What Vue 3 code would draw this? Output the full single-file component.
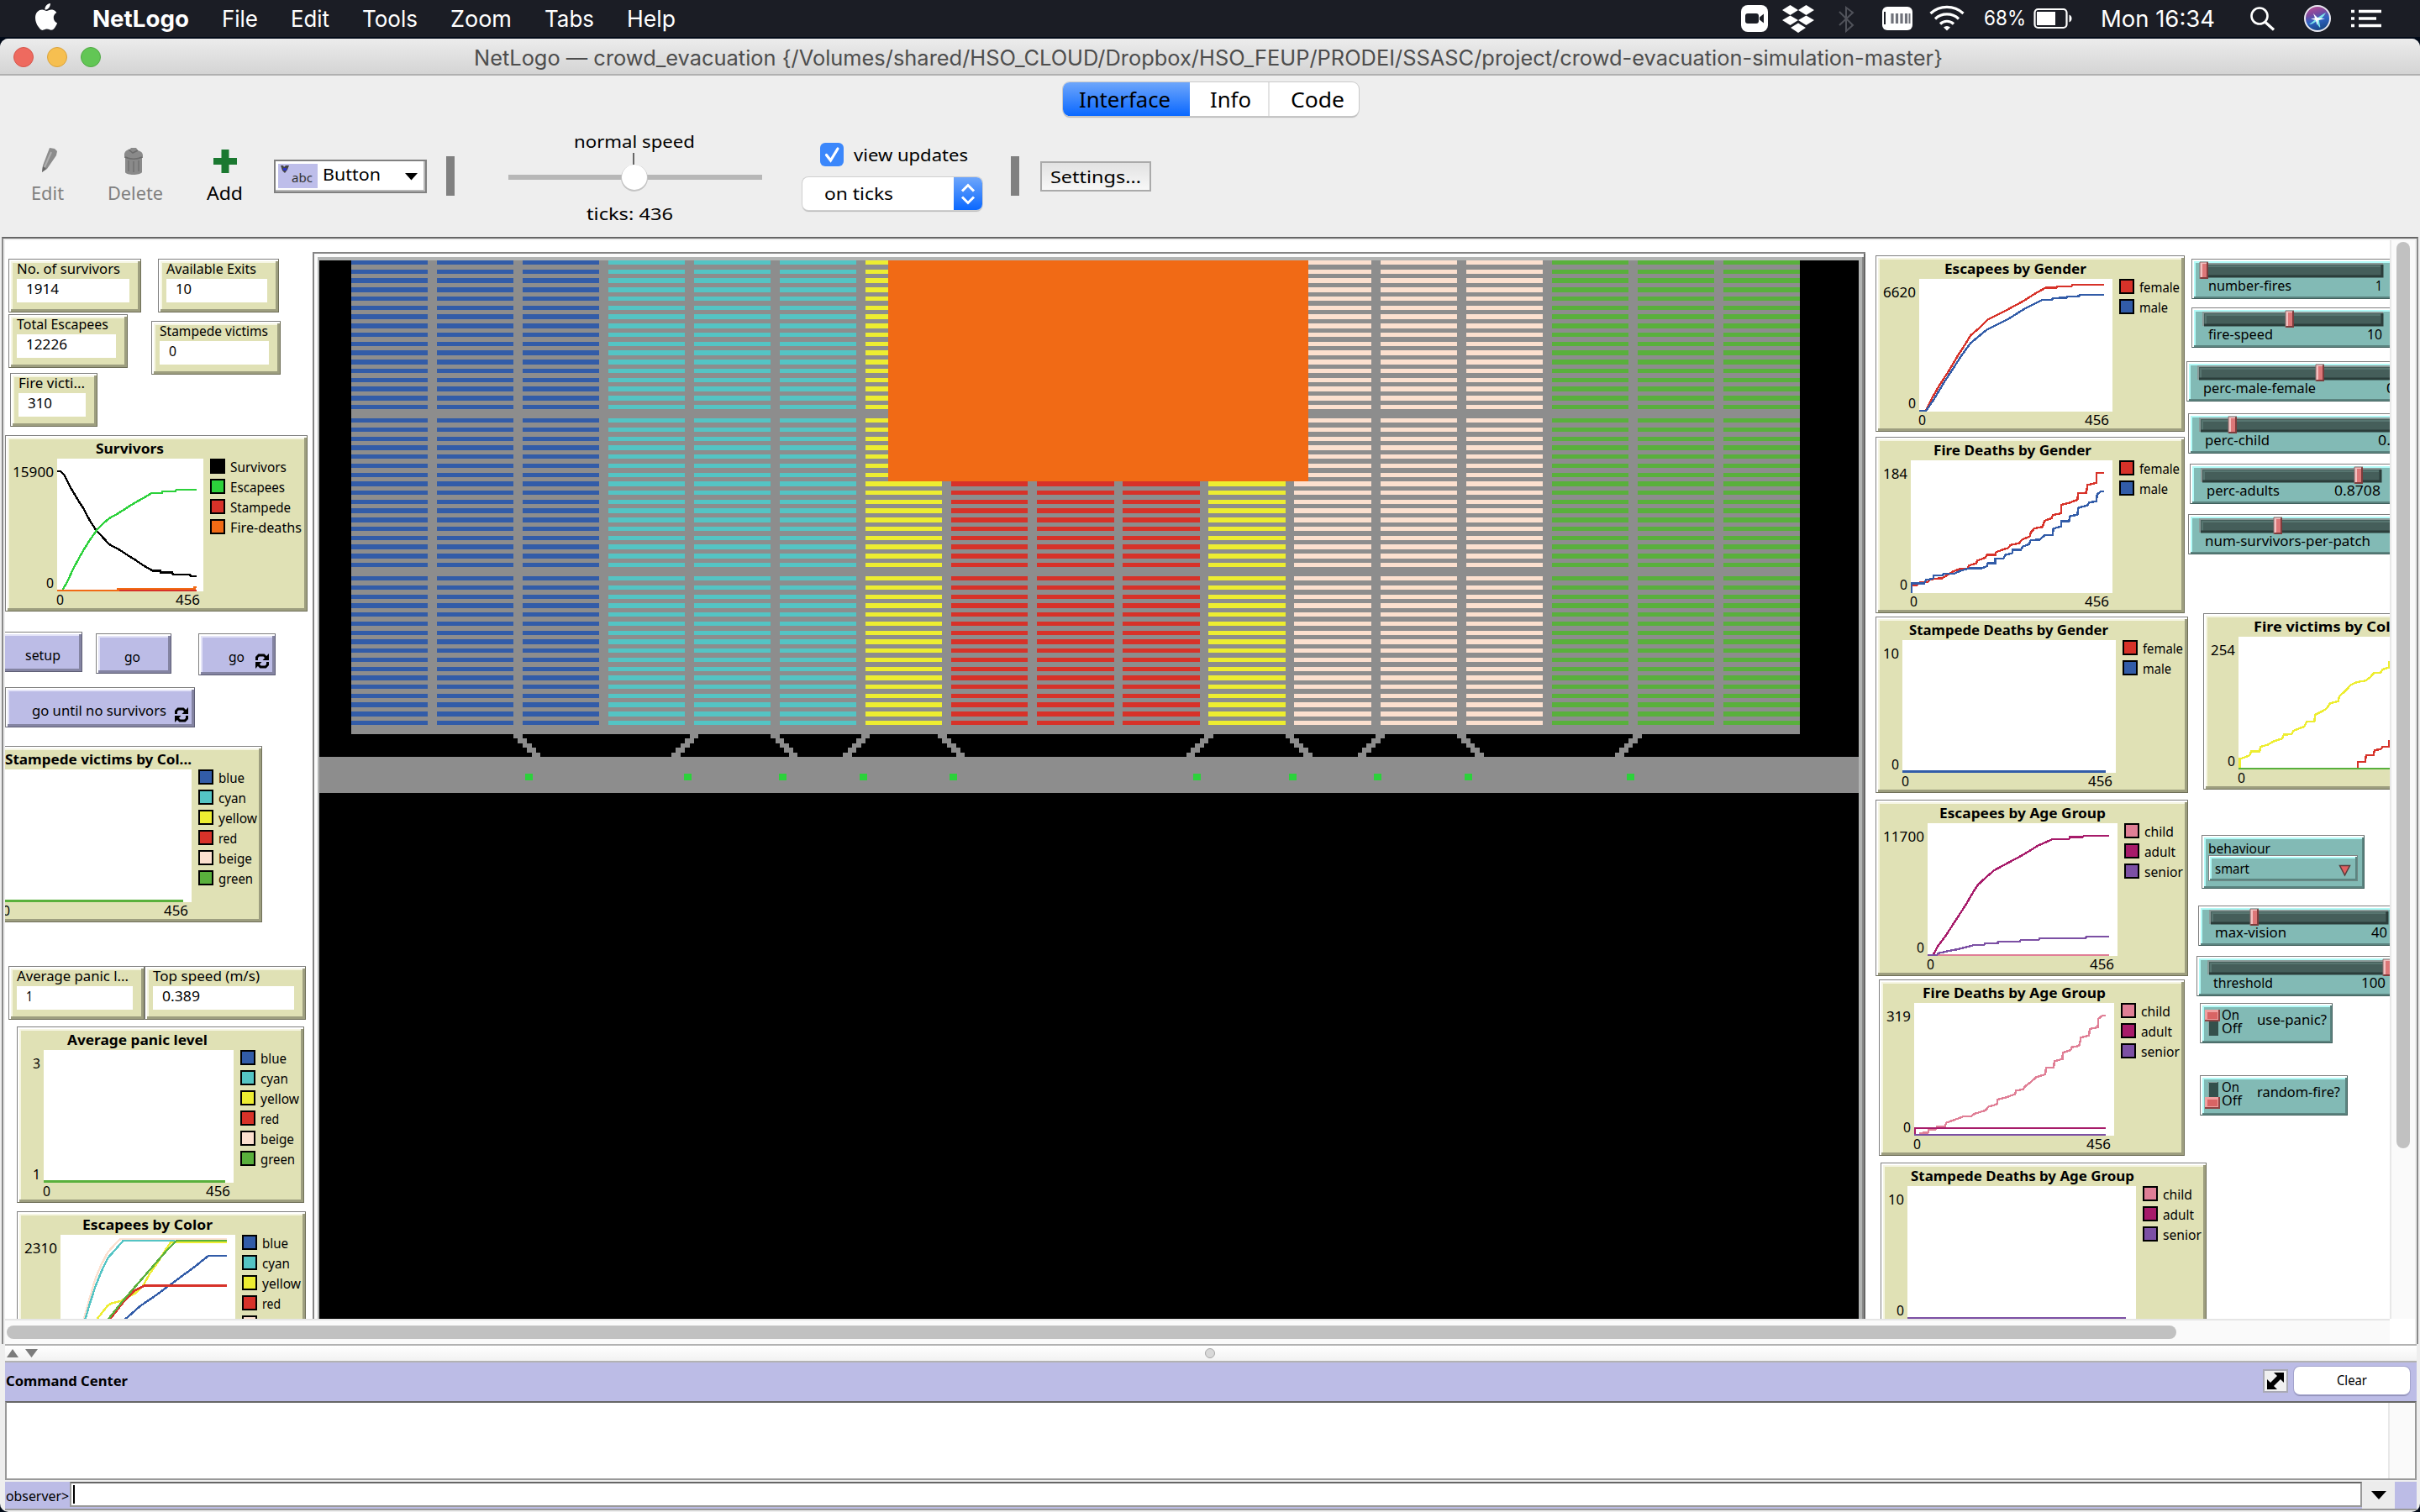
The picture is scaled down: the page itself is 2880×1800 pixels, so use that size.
<script setup>
import { h } from 'vue'

// One line of text set to an exact width; the baseline sits `size` px below the top.
const Txt = (p) =>
  h('svg', { width: p.w, height: Math.round(p.size * 1.2), style: 'display:block;overflow:visible;flex:none' }, [
    h('text', { x: 0, y: p.size, 'font-size': p.size, textLength: p.w, lengthAdjust: 'spacingAndGlyphs', fill: 'currentColor' }, p.t),
  ])
Txt.props = ['t', 'w', 'size']

const ORIGIN = { x: 6, y: 286 }
const place = (o) => ({
  left: o.x - ORIGIN.x + 'px',
  top: o.y - ORIGIN.y + 'px',
  width: o.w + 'px',
  height: o.h + 'px',
})

const menus = [
  { t: 'File', w: 43 }, { t: 'Edit', w: 46 }, { t: 'Tools', w: 66 },
  { t: 'Zoom', w: 73 }, { t: 'Tabs', w: 59 }, { t: 'Help', w: 58 },
]

const C = {
  blue: '#325ca8', cyan: '#54c4c4', yellow: '#eded31', red: '#d73229', beige: '#fce0cf', green: '#59b03c',
  lime: '#2cd13b', orange: '#f16a15', black: '#000000', pink: '#e07f96', magenta: '#a71b6a', purple: '#7c50a4',
}

const monitors = [
  { x: 10, y: 308, w: 158, h: 64, t: 'No. of survivors', tw: 123, v: '1914', vw: 39 },
  { x: 188, y: 308, w: 144, h: 64, t: 'Available Exits', tw: 107, v: '10', vw: 19 },
  { x: 10, y: 374, w: 142, h: 64, t: 'Total Escapees', tw: 109, v: '12226', vw: 49 },
  { x: 180, y: 382, w: 154, h: 64, t: 'Stampede victims', tw: 129, v: '0', vw: 9 },
  { x: 12, y: 444, w: 104, h: 64, t: 'Fire victi...', tw: 79, v: '310', vw: 29 },
  { x: 10, y: 1150, w: 162, h: 64, t: 'Average panic l...', tw: 133, v: '1', vw: 8 },
  { x: 172, y: 1150, w: 192, h: 64, t: 'Top speed (m/s)', tw: 127, v: '0.389', vw: 45 },
]

const buttons = [
  { x: 0, y: 752, w: 98, h: 48, t: 'setup', tx: 30, tw: 42 },
  { x: 114, y: 754, w: 90, h: 48, t: 'go', tx: 34, tw: 19 },
  { x: 236, y: 754, w: 92, h: 50, t: 'go', tx: 36, tw: 19, loop: 68 },
  { x: 6, y: 818, w: 226, h: 48, t: 'go until no survivors', tx: 32, tw: 160, loop: 202 },
]

const sixColors = [
  ['blue', C.blue, 31], ['cyan', C.cyan, 33], ['yellow', C.yellow, 46],
  ['red', C.red, 22], ['beige', C.beige, 40], ['green', C.green, 41],
]
const gender = [['female', C.red, 48], ['male', C.blue, 34]]
const ages = [['child', C.pink, 35], ['adult', C.magenta, 37], ['senior', C.purple, 46]]

const plots = [
  {
    x: 6, y: 518, w: 360, h: 210, t: 'Survivors', tx: 114, tw: 81, cx: 68, cw: 174, max: '15900', min: '0',
    legend: [['Survivors', C.black, 67], ['Escapees', C.lime, 65], ['Stampede', C.red, 72], ['Fire-deaths', C.orange, 85]],
    box: '204 673 522 398',
    lines: [
      [C.black, '204,711 216,711 223,716 230,722 240,740 250,757 270,785 285,806 300,825 320,858 345,890 366,908 390,930 430,948 460,965 480,975 515,995 545,1009 572,1009 574,1014 615,1014 617,1020 678,1020 680,1025 702,1025'],
      [C.lime, '222,1069 228,1060 240,1043 255,1015 270,990 285,967 300,945 320,918 345,888 365,870 390,852 420,838 450,822 480,806 510,792 540,777 577,777 579,771 627,771 629,766 702,766'],
      [C.red, '204,1069 702,1069'],
      [C.orange, '204,1069 422,1069 422,1064 694,1064 694,1058 702,1058'],
    ],
  },
  {
    x: -8, y: 888, w: 320, h: 210, t: 'Stampede victims by Col...', tx: 6, tw: 222, cx: 4, cw: 224, max: '', min: '',
    legend: sixColors, box: '12 78 672 344', lines: [[C.green, '12,419 654,419']],
  },
  {
    x: 20, y: 1222, w: 342, h: 210, t: 'Average panic level', tx: 80, tw: 167, cx: 52, cw: 226, max: '3', min: '1',
    legend: sixColors, box: '156 806 678 344', lines: [[C.green, '156,1147 804,1147']],
  },
  {
    x: 20, y: 1442, w: 344, h: 210, t: 'Escapees by Color', tx: 98, tw: 155, cx: 72, cw: 208, max: '2310', min: '0',
    legend: sixColors, box: '216 1285 624 344',
    lines: [
      [C.blue, '420,1525 450,1502 500,1470 560,1440 620,1408 700,1365 722,1352 745,1339 810,1339'],
      [C.yellow, '330,1520 348,1502 385,1468 400,1462 430,1457 480,1438 510,1418 535,1385 560,1360 590,1325 610,1304 810,1304'],
      [C.red, '370,1525 395,1502 440,1460 480,1430 515,1417 810,1417'],
      [C.beige, '292,1520 300,1502 320,1450 340,1400 360,1365 385,1330 410,1310 430,1296 810,1296'],
      [C.cyan, '296,1520 305,1502 320,1465 340,1420 362,1380 385,1345 410,1325 440,1300 625,1300'],
      [C.green, '365,1525 388,1502 440,1455 500,1405 560,1355 600,1322 630,1300 810,1300'],
    ],
  },
  {
    x: 2232, y: 304, w: 368, h: 210, t: 'Escapees by Gender', tx: 2314, tw: 169, cx: 2284, cw: 230, max: '6620', min: '0',
    legend: gender, box: '194 126 530 474',
    lines: [
      [C.red, '194,597 212,597 230,550 250,505 275,455 300,400 320,360 335,328 360,300 380,273 430,240 480,205 510,180 540,158 570,158 572,153 612,153 614,147 700,147'],
      [C.blue, '194,597 213,597 235,555 260,500 285,450 310,400 335,355 380,307 440,268 480,235 530,202 558,200 562,195 598,193 600,189 632,188 635,183 700,183'],
    ],
  },
  {
    x: 2232, y: 520, w: 368, h: 210, t: 'Fire Deaths by Gender', tx: 2301, tw: 188, cx: 2274, cw: 240, max: '184', min: '0',
    legend: gender, box: '171 774 553 474',
    lines: [
      [C.red, '173,1220 188,1220 195,1210 218,1208 220,1202 235,1197 257,1195 270,1185 285,1172 305,1162 328,1160 330,1150 350,1142 354,1132 375,1122 380,1112 403,1112 405,1102 425,1092 437,1088 445,1076 468,1070 475,1058 497,1046 500,1032 510,1017 532,1012 538,990 558,980 560,970 583,963 583,933 605,926 628,915 630,891 652,890 656,862 680,854 681,819 700,819'],
      [C.blue, '173,1248 173,1214 208,1214 212,1202 232,1196 234,1185 257,1185 262,1179 290,1179 308,1168 330,1160 365,1160 380,1152 382,1142 403,1142 403,1125 425,1125 430,1112 450,1105 450,1094 473,1094 478,1082 495,1074 500,1059 525,1057 538,1042 560,1040 562,1018 583,1010 583,992 605,992 607,974 628,968 630,944 655,935 660,925 680,920 682,896 692,885 700,885'],
    ],
  },
  {
    x: 2232, y: 734, w: 372, h: 210, t: 'Stampede Deaths by Gender', tx: 2272, tw: 237, cx: 2264, cw: 254, max: '10', min: '0',
    legend: gender, box: '148 97 585 474', lines: [[C.blue, '148,567 706,567']],
  },
  {
    x: 2622, y: 730, w: 380, h: 210, t: 'Fire victims by Color', tx: 2682, tw: 182, cx: 2664, cw: 240, max: '254', min: '0',
    legend: [], box: '1070 84 553 474',
    lines: [
      [C.yellow, '1073,555 1073,520 1085,516 1100,508 1105,494 1128,494 1130,477 1150,470 1165,458 1190,448 1194,434 1216,432 1220,420 1250,405 1257,387 1278,387 1280,363 1297,352 1310,342 1322,321 1343,315 1347,296 1365,275 1378,256 1395,246 1418,241 1430,230 1442,213 1460,212 1465,201 1482,194 1483,175 1500,175'],
      [C.red, '1397,552 1397,532 1417,530 1420,507 1440,507 1443,489 1460,486 1465,477 1482,477 1483,457 1500,457'],
      [C.green, '1070,555 1600,555'],
    ],
  },
  {
    x: 2232, y: 952, w: 372, h: 210, t: 'Escapees by Age Group', tx: 2308, tw: 198, cx: 2294, cw: 226, max: '11700', min: '0',
    legend: ages, box: '217 750 521 474',
    lines: [
      [C.pink, '217,1221 714,1221'],
      [C.magenta, '217,1221 232,1221 245,1190 265,1155 290,1105 320,1045 345,990 355,970 380,940 400,918 440,890 480,862 520,830 560,807 605,807 607,800 642,800 645,795 714,795'],
      [C.purple, '217,1221 243,1221 245,1215 265,1209 300,1200 345,1185 372,1185 375,1179 410,1178 412,1173 470,1173 472,1167 522,1167 525,1161 650,1161 653,1155 714,1155'],
    ],
  },
  {
    x: 2236, y: 1166, w: 364, h: 210, t: 'Fire Deaths by Age Group', tx: 2288, tw: 218, cx: 2278, cw: 238, max: '319', min: '0',
    legend: ages, box: '180 132 549 474',
    lines: [
      [C.pink, '193,597 218,595 220,585 240,583 243,574 265,572 268,560 285,552 300,545 315,537 337,537 345,528 375,516 385,502 407,494 409,477 430,470 457,458 460,445 480,440 484,430 500,415 515,397 540,387 542,363 563,363 565,340 587,332 588,310 610,300 613,290 633,285 638,255 660,248 662,225 684,219 686,188 697,177 706,177'],
      [C.magenta, '182,604 182,579 706,579'],
      [C.purple, '180,603 706,603'],
    ],
  },
  {
    x: 2238, y: 1384, w: 388, h: 210, t: 'Stampede Deaths by Age Group', tx: 2274, tw: 266, cx: 2270, cw: 272, max: '10', min: '0',
    legend: ages, box: '161 786 628 474', lines: [[C.purple, '161,1257 761,1257']],
  },
]

const digits = (s) => s.length * 10 - 1

const sliders = [
  { x: 2608, y: 308, w: 270, h: 48, t: 'number-fires', tw: 99, end: 228, knob: 10, v: '1', vx: 219, vw: 8 },
  { x: 2608, y: 366, w: 270, h: 48, t: 'fire-speed', tw: 77, end: 228, knob: 112, v: '10', vx: 209, vw: 18 },
  { x: 2602, y: 430, w: 270, h: 48, t: 'perc-male-female', tw: 134, end: 260, knob: 154, v: '0.5', vx: 238, vw: 25 },
  { x: 2604, y: 492, w: 270, h: 48, t: 'perc-child', tw: 77, end: 260, knob: 48, v: '0.1', vx: 226, vw: 25 },
  { x: 2606, y: 552, w: 270, h: 48, t: 'perc-adults', tw: 87, end: 228, knob: 196, v: '0.8708', vx: 172, vw: 55 },
  { x: 2604, y: 612, w: 270, h: 48, t: 'num-survivors-per-patch', tw: 197, end: 260, knob: 102, v: '', vx: 0, vw: 0 },
  { x: 2616, y: 1078, w: 270, h: 48, t: 'max-vision', tw: 85, end: 226, knob: 62, v: '40', vx: 206, vw: 19 },
  { x: 2614, y: 1138, w: 270, h: 48, t: 'threshold', tw: 71, end: 226, knob: 222, v: '100', vx: 196, vw: 29 },
]

const switches = [
  { x: 2618, y: 1194, w: 158, h: 48, t: 'use-panic?', tw: 83, on: true },
  { x: 2618, y: 1280, w: 176, h: 48, t: 'random-fire?', tw: 99, on: false },
]

// Stadium drawn patch by patch
const P = 5.3724
const px = (n) => Math.round(n * P)
const blockColors = [
  C.blue, C.blue, C.blue, C.cyan, C.cyan, C.cyan, C.yellow, C.red, C.red, C.red, C.yellow,
  C.beige, C.beige, C.beige, C.green, C.green, C.green,
]
const rowStarts = [0, 35, 70].flatMap((g) => Array.from({ length: 17 }, (_, k) => g + 2 * k))
const seats = blockColors.map((c, i) => {
  const x0 = px(7 + 19 * i)
  const x1 = px(24 + 19 * i)
  return { c, d: rowStarts.map((n) => `M${x0} ${px(n)}H${x1}V${px(n + 1)}H${x0}Z`).join('') }
})
const ramps = [[43, 1], [82, -1], [100, 1], [120, -1], [137, 1], [196, -1], [214, 1], [234, -1], [252, 1], [291, -1]]
const rampPath = ramps
  .flatMap(([c, dir]) => [0, 1, 2, 3, 4].map((k) => {
    const a = px(c + dir * k)
    const b = px(c + dir * k + 2)
    return `M${a} ${px(105 + k)}H${b}V${px(106 + k)}H${a}Z`
  }))
  .join('')
const exits = [629, 818, 931, 1027, 1134, 1424, 1538, 1639, 1747, 1940].map((x) => x - 380 - 4)
</script>

<template>
  <div class="screen">
    <header class="menubar">
      <svg class="apple" width="26" height="32" viewBox="0 0 26 32">
        <path fill="#fff" d="M17.9 0c.2 2-.6 3.900-1.700 5.300-1.200 1.400-3 2.500-4.800 2.300-.2-1.900.7-3.900 1.700-5.100C14.300 1.100 16.300.1 17.900 0zM25.300 11.100c-.3.200-3.500 2-3.500 6 0 4.700 4.100 6.300 4.200 6.400 0 .1-.6 2.200-2.200 4.400-1.300 2-2.700 3.900-4.900 3.900-2.100 0-2.700-1.200-5.200-1.200-2.400 0-3.200 1.300-5.200 1.300s-3.300-1.900-4.900-4.100C1.700 25.200 0 21.100 0 17.200 0 10.900 4.100 7.600 8.200 7.600c2.100 0 3.900 1.400 5.300 1.400 1.300 0 3.300-1.500 5.700-1.500.9 0 4.200.1 6.100 3.600z" />
      </svg>
      <Txt class="app-name" t="NetLogo" :w="115" :size="27" />
      <Txt v-for="m in menus" :key="m.t" :t="m.t" :w="m.w" :size="27" />
      <svg class="status" width="770" height="44" viewBox="2068 0 770 44">
        <rect x="2072" y="6" width="32" height="32" rx="8" fill="#fff" />
        <rect x="2077" y="16" width="16" height="12" rx="3" fill="#1b1d25" />
        <path d="M2094 20.500l5-4v11l-5-4z" fill="#1b1d25" />
        <g fill="#fff">
          <path d="M2130.500 6l9.500 6-9.500 6-9.500-6zM2149.500 6l9.500 6-9.500 6-9.500-6zM2130.500 18.500l9.500 5.500-9.500 6-9.500-6zM2149.500 18.500l9.500 5.500-9.500 6-9.500-6zM2140 27.500l9 5.500-9 6-9-6z" />
        </g>
        <path d="M2189 14l16 16-8 7V9l8 6-16 15" fill="none" stroke="#50525a" stroke-width="2" />
        <rect x="2240" y="8" width="36" height="28" rx="6" fill="#fff" />
        <path d="M2243 14v15" stroke="#1b1d25" stroke-width="2" />
        <path d="M2252 16v12M2257.500 16v12M2263 16v12M2268.500 16v12" stroke="#70727a" stroke-width="3.200" />
        <path d="M2272.500 16v12" stroke="#70727a" stroke-width="2" />
        <g fill="none" stroke="#fff" stroke-width="3.200">
          <path d="M2297.500 16a29 29 0 0 1 39 0" />
          <path d="M2303 22.500a20.500 20.500 0 0 1 28 0" />
          <path d="M2309 28.500a11.500 11.500 0 0 1 16 0" />
        </g>
        <path d="M2313 32.500a6 6 0 0 1 8 0l-4 4z" fill="#fff" />
        <text x="2361" y="30" font-size="24" textLength="50" lengthAdjust="spacingAndGlyphs" fill="#fff">68%</text>
        <rect x="2421.500" y="11" width="38" height="22" rx="4" fill="none" stroke="#fff" stroke-width="2.200" />
        <rect x="2424" y="14" width="22" height="16" fill="#fff" />
        <path d="M2462.500 17.500c4 1 4 8 0 9z" fill="#fff" />
        <text x="2500" y="32" font-size="27" textLength="136" lengthAdjust="spacingAndGlyphs" fill="#fff">Mon 16:34</text>
        <circle cx="2689" cy="19" r="9.500" fill="none" stroke="#fff" stroke-width="2.600" />
        <path d="M2696 26.500l10 9" stroke="#fff" stroke-width="3.200" />
        <defs>
          <linearGradient id="siri" x1="0" y1="0" x2="0.300" y2="1">
            <stop offset="0" stop-color="#c8508f" /><stop offset="0.400" stop-color="#7a4aa0" />
            <stop offset="0.650" stop-color="#2f63c4" /><stop offset="1" stop-color="#1b4a8c" />
          </linearGradient>
        </defs>
        <circle cx="2758" cy="22" r="15" fill="url(#siri)" stroke="#e8e8f0" stroke-width="2" />
        <path d="M2748 29c5-3 10-9 20-14-3 5-6 8-8 9 0 4 2 8 1 9-3-3-4-6-4-8-3 2-5 4-9 4z" fill="#7fe6ea" />
        <path d="M2753 16l5 5 9 1.500-8.500 1.500-1 6-1.500-6-6-1.500 5-1z" fill="#fff" />
        <path d="M2798 13.500h4M2798 22h4M2798 30.500h4" stroke="#fff" stroke-width="3.600" />
        <path d="M2807 13.500h27M2807 22h21M2807 30.500h27" stroke="#fff" stroke-width="3.600" />
      </svg>
    </header>

    <main class="window">
      <div class="titlebar">
        <i class="light close"></i><i class="light mini"></i><i class="light full"></i>
        <Txt class="title" t="NetLogo — crowd_evacuation {/Volumes/shared/HSO_CLOUD/Dropbox/HSO_FEUP/PRODEI/SSASC/project/crowd-evacuation-simulation-master}" :w="1748" :size="25" />
      </div>

      <div class="toolbar">
        <nav class="tabs">
          <span class="tab active"><Txt t="Interface" :w="109" :size="25" /></span>
          <span class="tab info"><Txt t="Info" :w="49" :size="25" /></span>
          <span class="tab code"><Txt t="Code" :w="64" :size="25" /></span>
        </nav>
        <div class="tools">
          <svg class="tool" width="60" height="90" viewBox="30 160 60 90">
            <path d="M59 176l6 1 3 3-1 5-11 16-6 4 1-8z" fill="#8c8c8c" />
            <path d="M61 181l-8 18" stroke="#b0b0b0" stroke-width="2" />
            <path d="M50 205l1-7 4 3z" fill="#666" />
            <text x="37" y="238" font-size="21" textLength="39" lengthAdjust="spacingAndGlyphs" fill="#808080">Edit</text>
          </svg>
          <svg class="tool t-delete" width="80" height="90" viewBox="120 160 80 90">
            <path d="M148 184c0-4 4-6 6-6l2-2h6l2 3c4 1 6 3 6 6v3h-1v17c-2 4-19 4-20 0v-17h-1z" fill="#8a8a8a" />
            <path d="M149 187c5 3 15 3 20 0M153 178l5 4 6-3" stroke="#6c6c6c" stroke-width="1.500" fill="none" />
            <path d="M153 191v13M159 192v13M165 191v13" stroke="#707070" stroke-width="1.500" />
            <text x="128" y="238" font-size="21" textLength="66" lengthAdjust="spacingAndGlyphs" fill="#808080">Delete</text>
          </svg>
          <svg class="tool t-add" width="60" height="90" viewBox="236 160 60 90">
            <path d="M263.500 178h9v10h9.500v8h-9.500v10h-9v-10H254v-8h9.500z" fill="#1a7830" />
            <text x="246" y="238" font-size="21" textLength="43" lengthAdjust="spacingAndGlyphs">Add</text>
          </svg>
          <div class="combo">
            <svg width="174" height="32" viewBox="330 194 174 32">
              <rect x="331" y="195" width="47" height="29" fill="#bebeea" />
              <path d="M334 197h3l1 2 2-2h4l-2 5-3 4-3-3z" fill="#444" /><path d="M337 200h4v3h-4z" fill="#2b33cc" />
              <text x="347" y="217" font-size="15" textLength="25" lengthAdjust="spacingAndGlyphs" fill="#333">abc</text>
              <text x="384" y="215" font-size="20" textLength="69" lengthAdjust="spacingAndGlyphs">Button</text>
              <path d="M482 206h15l-7.500 8.500z" />
            </svg>
          </div>
          <i class="sep s1"></i>
          <svg class="speed" width="310" height="120" viewBox="600 150 310 120">
            <text x="683" y="176" font-size="20" textLength="144" lengthAdjust="spacingAndGlyphs">normal speed</text>
            <path d="M754 182v16" stroke="#666" stroke-width="2" />
            <rect x="605" y="208" width="302" height="6" fill="#b7b7b7" />
            <circle cx="755" cy="212" r="16" fill="#c4c4c4" />
            <circle cx="755" cy="211" r="15" fill="#fff" />
            <text x="698" y="262" font-size="20" textLength="103" lengthAdjust="spacingAndGlyphs">ticks: 436</text>
          </svg>
          <div class="updates">
            <div class="check">
              <svg width="28" height="28" viewBox="0 0 28 28">
                <rect width="28" height="28" rx="6" fill="#3b87fb" />
                <path d="M7.500 14.500l5 6.500 8.500-14" fill="none" stroke="#fff" stroke-width="3.200" stroke-linecap="round" />
              </svg>
              <Txt t="view updates" :w="136" :size="20" />
            </div>
            <div class="popup">
              <Txt t="on ticks" :w="82" :size="20" />
              <span class="stepper">
                <svg width="18" height="26" viewBox="0 0 18 26" fill="none" stroke="#fff" stroke-width="3">
                  <path d="M2 9.500l7-7 7 7M2 16.500l7 7 7-7" />
                </svg>
              </span>
            </div>
          </div>
          <i class="sep s2"></i>
          <div class="settings"><Txt t="Settings..." :w="108" :size="20" /></div>
        </div>
      </div>

      <div class="workspace">
        <div class="work-row">
          <div class="canvas">
            <div v-for="m in monitors" :key="m.t" class="widget khaki" :style="place(m)">
              <svg :width="m.w" :height="m.h">
                <rect x="10" y="24" :width="m.w - 24" height="28" fill="#fff" />
                <text x="10" y="18" :textLength="m.tw" lengthAdjust="spacingAndGlyphs">{{ m.t }}</text>
                <text x="21" y="42" :textLength="m.vw" lengthAdjust="spacingAndGlyphs">{{ m.v }}</text>
              </svg>
            </div>

            <div v-for="(b, i) in buttons" :key="'b' + i" class="widget lavender" :style="place(b)">
              <svg :width="b.w" :height="b.h">
                <text :x="b.tx" y="34" :textLength="b.tw" lengthAdjust="spacingAndGlyphs">{{ b.t }}</text>
                <g v-if="b.loop" :transform="`translate(${b.loop} 24)`">
                  <path d="M1.500 8V4.500L4 2h6l3 3M14.500 10v3.500L12 16H6l-3-3" fill="none" stroke="#000" stroke-width="3" />
                  <path d="M8.500 8H16V0zM7.500 10H0v8z" />
                </g>
              </svg>
            </div>

            <div v-for="p in plots" :key="p.t" class="widget khaki" :style="place(p)">
              <svg :width="p.w" :height="p.h" :viewBox="`${p.x} ${p.y} ${p.w} ${p.h}`">
                <rect :x="p.cx" :y="p.y + 28" :width="p.cw" height="158" fill="#fff" />
                <text class="bold" :x="p.tx" :y="p.y + 22" :textLength="p.tw" lengthAdjust="spacingAndGlyphs">{{ p.t }}</text>
                <text v-if="p.max" :x="p.cx - 4 - digits(p.max)" :y="p.y + 50" :textLength="digits(p.max)" lengthAdjust="spacingAndGlyphs">{{ p.max }}</text>
                <text v-if="p.min" :x="p.cx - 13" :y="p.y + 182" textLength="9" lengthAdjust="spacingAndGlyphs">{{ p.min }}</text>
                <text :x="p.cx - 1" :y="p.y + 202" textLength="9" lengthAdjust="spacingAndGlyphs">0</text>
                <text :x="p.cx + p.cw - 33" :y="p.y + 202" textLength="29" lengthAdjust="spacingAndGlyphs">456</text>
                <g v-for="(l, i) in p.legend" :key="l[0]">
                  <rect :x="p.cx + p.cw + 9" :y="p.y + 29 + 24 * i" width="16" height="16" :fill="l[1]" stroke="#000" stroke-width="2" />
                  <text :x="p.cx + p.cw + 32" :y="p.y + 44 + 24 * i" :textLength="l[2]" lengthAdjust="spacingAndGlyphs">{{ l[0] }}</text>
                </g>
                <svg :x="p.cx" :y="p.y + 28" :width="p.cw" height="158" :viewBox="p.box" preserveAspectRatio="none">
                  <polyline v-for="(l, i) in p.lines" :key="i" class="curve" :points="l[1]" :stroke="l[0]" />
                </svg>
              </svg>
            </div>

            <div v-for="s in sliders" :key="s.t" class="widget teal" :style="place(s)">
              <svg :width="s.w" :height="s.h">
                <rect x="14" y="6" :width="s.end - 14" height="16" fill="#455e5a" />
                <path :d="`M14 22V6H${s.end}`" fill="none" stroke="#8a9a98" stroke-width="2" />
                <path :d="`M17 20V9H${s.end - 3}`" fill="none" stroke="#577570" stroke-width="2" />
                <path :d="`M15 21H${s.end - 1}V7`" fill="none" stroke="#2b3d3a" stroke-width="3" />
                <g :transform="`translate(${s.knob} 4)`">
                  <rect width="10" height="20" fill="#7d3c3c" />
                  <rect width="8" height="18" fill="#f3c0c0" />
                  <rect x="3" y="2" width="5" height="16" fill="#dc7778" />
                  <path d="M0 20V0h10" fill="none" stroke="#8a6a6a" stroke-width="1" />
                </g>
                <text x="20" y="38" :textLength="s.tw" lengthAdjust="spacingAndGlyphs">{{ s.t }}</text>
                <text v-if="s.v" :x="s.vx" y="38" :textLength="s.vw" lengthAdjust="spacingAndGlyphs">{{ s.v }}</text>
              </svg>
            </div>

            <div class="widget teal" :style="place({ x: 2620, y: 994, w: 194, h: 64 })">
              <svg width="194" height="64">
                <text x="8" y="22" textLength="74" lengthAdjust="spacingAndGlyphs">behaviour</text>
              </svg>
              <div class="chooser">
                <svg width="176" height="32">
                  <text x="8" y="22" textLength="41" lengthAdjust="spacingAndGlyphs">smart</text>
                  <path d="M156.500 12.500h12l-6 11.500z" fill="#df6161" stroke="#5b3b3b" stroke-width="1.500" />
                </svg>
              </div>
            </div>

            <div v-for="s in switches" :key="s.t" class="widget teal" :style="place(s)">
              <svg :width="s.w" :height="s.h">
                <rect x="10" y="8" width="12" height="31" fill="#34504c" />
                <path d="M10.500 39V8.500H21" fill="none" stroke="#8aa09e" />
                <g :transform="`translate(6 ${s.on ? 8 : 26})`">
                  <rect width="18" height="14" fill="#8f4343" />
                  <rect width="16" height="12" fill="#f0a0a0" />
                  <rect x="3" y="3" width="12" height="8" fill="#d96464" />
                </g>
                <text x="26" y="20" textLength="21" lengthAdjust="spacingAndGlyphs">On</text>
                <text x="26" y="36" textLength="24" lengthAdjust="spacingAndGlyphs">Off</text>
                <text x="68" y="26" :textLength="s.tw" lengthAdjust="spacingAndGlyphs">{{ s.t }}</text>
              </svg>
            </div>

            <div class="view" :style="place({ x: 372, y: 300, w: 1848, h: 1280 })">
              <svg width="1832" height="1262" viewBox="0 0 1832 1262" shape-rendering="crispEdges">
                <rect width="1832" height="1262" />
                <rect x="38" y="0" width="1724" height="564" fill="#8d8d8d" />
                <rect x="0" y="591" width="1832" height="43" fill="#8d8d8d" />
                <path :d="rampPath" fill="#8d8d8d" />
                <path v-for="(s, i) in seats" :key="i" :d="s.d" :fill="s.c" />
                <rect x="677" y="0" width="500" height="263" fill="#f16a15" />
                <rect v-for="x in exits" :key="x" :x="x" y="611" width="9" height="8" fill="#2cd13b" />
              </svg>
            </div>
          </div>
          <div class="vscroll"><i></i></div>
        </div>
        <div class="hscroll"><i></i></div>
      </div>

      <div class="splitter">
        <svg width="40" height="16" viewBox="0 0 40 16" fill="#7c7c7c"><path d="M2 13l7-10 7 10zM24 3h15l-7.500 10z" /></svg>
        <i class="grip"></i>
      </div>

      <div class="cc-head">
        <Txt class="cc-title" t="Command Center" :w="145" :size="16" />
        <div class="cc-actions">
          <span class="flip">
            <svg width="22" height="22" viewBox="0 0 22 22"><path d="M9 1h12v12l-4-4-8 8 4 4H1V9l4 4 8-8z" /></svg>
          </span>
          <span class="clear"><Txt t="Clear" :w="36" :size="16" /></span>
        </div>
      </div>
      <div class="cc-output"><i></i></div>
      <div class="cc-input">
        <span class="prompt"><Txt t="observer>" :w="75" :size="16" /></span>
        <span class="field"><i class="caret"></i></span>
        <span class="history"><svg width="20" height="12" viewBox="0 0 20 12"><path d="M1 1h18l-9 10z" /></svg></span>
      </div>
    </main>
  </div>
</template>

<style>
body { margin: 0; background: #020a18; }
</style>

<style scoped>
.screen {
  width: 2880px; height: 1800px; overflow: hidden; display: flex; flex-direction: column;
  background: #020a18; font-family: "Noto Sans", "Open Sans", sans-serif; font-size: 16px; color: #000;
}
.menubar {
  height: 44px; margin-bottom: 2px; padding: 5px 42px 0; box-sizing: border-box; display: flex; gap: 39px;
  background: #1b1d25; color: #fff; font-family: Inter, sans-serif; flex: none;
}
.apple { margin: -1px 3px 0 0; flex: none; }
.app-name { font-weight: 700; }
.status { margin: -5px 0 0 auto; flex: none; }
.window {
  height: 1754px; flex: none; display: flex; flex-direction: column; background: #eee;
  border-radius: 10px; overflow: hidden;
}
.titlebar {
  height: 44px; box-sizing: border-box; border-bottom: 2px solid #b0b0b0; display: flex; padding-left: 16px;
  background: linear-gradient(#ececec, #d4d4d4); font-family: Inter, sans-serif; color: #4d4d4d; flex: none;
}
.light { width: 24px; height: 24px; box-sizing: border-box; border-radius: 50%; margin: 10px 16px 0 0; }
.close { background: #ee6a5f; border: 1px solid #d5554b; }
.mini { background: #f6bf50; border: 1px solid #d9a23c; }
.full { background: #62c655; border: 1px solid #50a845; }
.title { margin: 7px 0 0 428px; }
.toolbar { height: 192px; flex: none; padding-top: 8px; box-sizing: border-box; }
.tabs {
  width: 352px; height: 40px; margin-left: 1265px; display: flex; background: #fff; border-radius: 8px;
  overflow: hidden; box-shadow: 0 0 0 1px #c9c9c9, 0 2px 1px #b5b5b5;
}
.tab { box-sizing: border-box; padding-top: 5px; height: 40px; }
.active { width: 151px; padding-left: 19px; background: linear-gradient(#6ea6fb, #0a68ff); }
.info { width: 95px; padding-left: 24px; border-right: 2px solid #e3e3e3; }
.code { width: 106px; padding-left: 25px; }
.tools { height: 144px; display: flex; padding-left: 30px; }
.tool { margin-top: 22px; }
.t-delete { margin-left: 30px; }
.t-add { margin-left: 36px; }
.combo {
  width: 182px; height: 40px; box-sizing: border-box; margin: 52px 0 0 30px; padding: 2px 0 0 2px; background: #fff;
  border: 2px solid #808080; box-shadow: inset -2px -2px 0 #b8b8b8;
}
.combo svg { display: block; }
.sep { width: 10px; height: 47px; margin-top: 48px; background: #808080; }
.s1 { margin-left: 23px; }
.s2 { margin-left: 34px; }
.speed { margin: 12px 0 0 59px; }
.updates { width: 214px; margin: 32px 0 0 45px; }
.check { display: flex; gap: 12px; padding-left: 21px; height: 41px; }
.check > :last-child { margin-top: 2px; }
.popup {
  height: 39px; display: flex; justify-content: space-between; padding: 0 0 0 26px; background: #fff; border-radius: 7px;
  box-shadow: 0 0 0 1px #d0d0d0, 0 2px 1px #b8b8b8;
}
.popup > :first-child { margin-top: 7px; }
.stepper {
  width: 34px; display: flex; align-items: center; justify-content: center; border-radius: 0 7px 7px 0;
  background: linear-gradient(#6ea6fb, #0a68ff);
}
.settings {
  width: 132px; height: 36px; box-sizing: border-box; margin: 54px 0 0 25px; padding: 4px 0 0 10px;
  border: 2px solid #aaa; background: linear-gradient(#e2e2e2, #f8f8f8);
}

.workspace {
  height: 1318px; box-sizing: border-box; margin: 0 2px; flex: none; background: #fff; display: flex; flex-direction: column;
  border: 2px solid #8a8a8a; border-top-color: #666; border-bottom: 0; box-shadow: inset 2px 2px 0 #eee, inset -2px 0 0 #eee;
  padding: 2px 2px 0;
}
.work-row { display: flex; height: 1284px; }
.canvas { position: relative; width: 2838px; height: 1284px; overflow: hidden; background: #fff; }
.vscroll { flex: 1; box-sizing: border-box; border-left: 2px solid #e8e8e8; background: #fafafa; padding: 2px 0 0 6px; }
.vscroll i { display: block; width: 16px; height: 1079px; border-radius: 8px; background: #c1c1c1; }
.hscroll {
  width: 2838px; height: 30px; box-sizing: border-box; border-top: 2px solid #e6e6e6; background: #fafafa; padding: 6px 0 0 2px;
}
.hscroll i { display: block; width: 2582px; height: 16px; border-radius: 8px; background: #c1c1c1; }

.widget { position: absolute; }
.widget > svg { display: block; }
.khaki {
  background: #e0e1b5;
  box-shadow: inset 1px 1px 0 #808080, inset -1px -1px 0 #6f6f58, inset 3px 3px 0 #fff, inset -4px -4px 0 #9d9e7f,
    inset 5px 5px 0 #f6f6e4;
}
.lavender {
  background: #bcbce6;
  box-shadow: inset 1px 1px 0 #808080, inset -1px -1px 0 #5e5e75, inset 3px 3px 0 #fff, inset -4px -4px 0 #8484a2,
    inset 5px 5px 0 #e4e4f8;
}
.teal {
  background: #82bab5;
  box-shadow: inset 1px 1px 0 #808080, inset -1px -1px 0 #41605d, inset 3px 3px 0 #fff, inset -3px -3px 0 #5b8480,
    inset 5px 5px 0 #b3fbf8;
}
.bold { font-weight: 700; }
.curve { fill: none; stroke-width: 2.4px; vector-effect: non-scaling-stroke; shape-rendering: crispEdges; }
.chooser {
  position: absolute; left: 8px; top: 24px; width: 178px; height: 31px; background: #82bab5;
  box-shadow: inset 1px 1px 0 #808080, inset -1px -1px 0 #6f8885, inset 2px 2px 0 #fff, inset -3px -3px 0 #5b8480,
    inset 4px 4px 0 #b3fbf8;
}
.view {
  position: absolute; box-sizing: border-box; padding: 10px 0 0 8px; background: #b2b4b3;
  box-shadow: inset 2px 2px 0 #858585, inset -2px 0 0 #666, inset 6px 6px 0 #fbfbfb, inset -4px 0 0 #8a8a8a;
}
.view svg { display: block; }

.splitter {
  height: 22px; box-sizing: border-box; margin: 0 4px 0 6px; flex: none; display: flex; align-items: center;
  border-top: 2px solid #b2b2b2; border-bottom: 2px solid #b2b2b2; background: linear-gradient(#fff, #f2f2f2);
}
.grip {
  width: 12px; height: 12px; box-sizing: border-box; border-radius: 50%; background: #d8d8d8; border: 1px solid #a8a8a8;
  margin-left: 1388px;
}
.cc-head {
  height: 46px; flex: none; margin: 0 4px 0 6px; padding: 12px 8px 0 1px; display: flex; justify-content: space-between;
  box-sizing: border-box; background: #bcbce6;
}
.cc-title { font-weight: 700; }
.cc-actions { display: flex; gap: 7px; margin-top: -7px; }
.flip {
  width: 30px; height: 28px; box-sizing: border-box; margin-top: 3px; border: 2px solid #a9a9b4; background: #f0f0f0;
  display: flex; align-items: center; justify-content: center;
}
.clear {
  width: 138px; height: 33px; border-radius: 7px; background: #fff; box-shadow: 0 0 0 1px #a3a3cc, 0 2px 1px #8e8eb4;
  display: flex; justify-content: center; padding-top: 6px; box-sizing: border-box;
}
.cc-output {
  height: 94px; flex: none; margin: 0 4px 2px 6px; box-sizing: border-box; border: 2px solid #999; border-top-color: #666;
  background: #fff; display: flex; justify-content: flex-end;
}
.cc-output i { width: 32px; box-sizing: border-box; border-left: 2px solid #e8e8e8; background: #fafafa; }
.cc-input { height: 34px; box-sizing: border-box; flex: none; margin: 0 4px 0 6px; display: flex; background: #bcbce6; border-bottom: 2px solid #999; }
.prompt { width: 77px; box-sizing: border-box; padding: 7px 0 0 1px; }
.field {
  width: 2728px; height: 30px; box-sizing: border-box; border: 2px solid #999; border-top-color: #666; background: #fff;
  padding: 2px;
}
.caret { display: block; width: 2px; height: 22px; background: #000; }
.history {
  width: 39px; height: 32px; background: #ececec; display: flex; align-items: center; justify-content: center;
}
</style>
